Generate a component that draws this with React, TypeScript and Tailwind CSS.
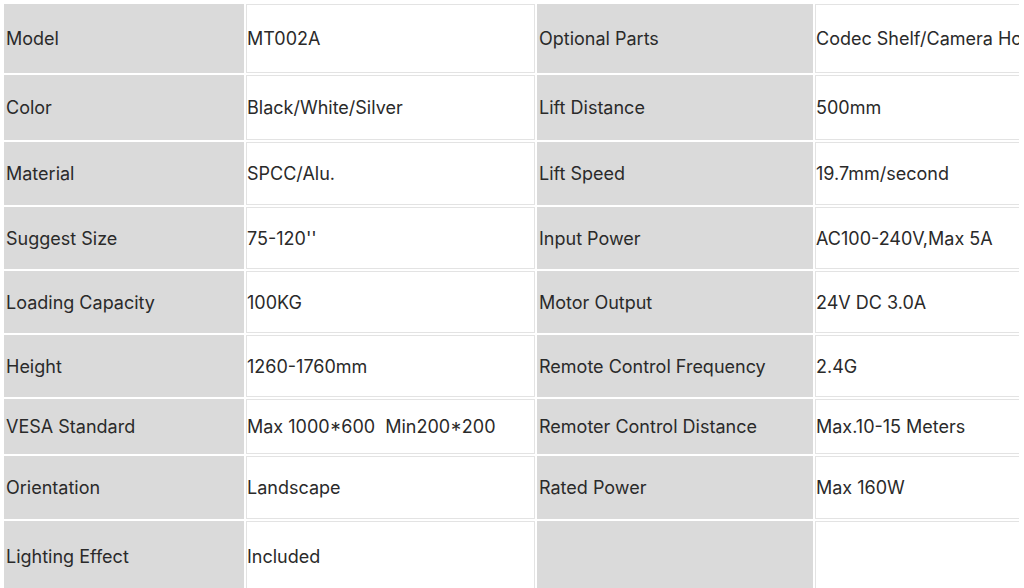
import React from "react";

const rows: { h: string; a: string; b: string; c: string; d: string }[] = [
  { h: "h-[69px]", a: "Model", b: "MT002A", c: "Optional Parts", d: "Codec Shelf/Camera Holder" },
  { h: "h-[65px]", a: "Color", b: "Black/White/Silver", c: "Lift Distance", d: "500mm" },
  { h: "h-[63px]", a: "Material", b: "SPCC/Alu.", c: "Lift Speed", d: "19.7mm/second" },
  { h: "h-[62px]", a: "Suggest Size", b: "75-120''", c: "Input Power", d: "AC100-240V,Max 5A" },
  { h: "h-[62px]", a: "Loading Capacity", b: "100KG", c: "Motor Output", d: "24V DC 3.0A" },
  { h: "h-[62px]", a: "Height", b: "1260-1760mm", c: "Remote Control Frequency", d: "2.4G" },
  { h: "h-[55px]", a: "VESA Standard", b: "Max 1000*600\u00a0\u00a0Min200*200", c: "Remoter Control Distance", d: "Max.10-15 Meters" },
  { h: "h-[63px]", a: "Orientation", b: "Landscape", c: "Rated Power", d: "Max 160W" },
  { h: "h-[70px]", a: "Lighting Effect", b: "Included", c: "", d: "" },
];

export default function App() {
  return (
    <div
      className="w-[1024px] h-[588px] overflow-hidden bg-white text-[18px] text-[#2a2a2a]"
      style={{ fontFamily: "Inter, 'Noto Sans', sans-serif" }}
    >
      <div className="w-[1019px] h-[588px] overflow-hidden p-[2px]">
        <table className="table-fixed border-separate border-spacing-[2px] w-[1077px]">
          <colgroup>
            <col className="w-[240px]" />
            <col className="w-[289px]" />
            <col className="w-[276px]" />
            <col className="w-[262px]" />
          </colgroup>
          <tbody>
            {rows.map((r, i) => (
              <tr key={i} className={r.h}>
                <td className="border border-[#dadada] bg-[#dadada] p-[1px] whitespace-nowrap align-middle">{r.a}</td>
                <td className="border border-[#e3e3e3] bg-white p-0 whitespace-nowrap align-middle">{r.b}</td>
                <td className="border border-[#dadada] bg-[#dadada] p-[1px] whitespace-nowrap align-middle">{r.c}</td>
                <td className="border border-[#e3e3e3] bg-white p-0 whitespace-nowrap overflow-hidden align-middle">{r.d}</td>
              </tr>
            ))}
          </tbody>
        </table>
      </div>
    </div>
  );
}
